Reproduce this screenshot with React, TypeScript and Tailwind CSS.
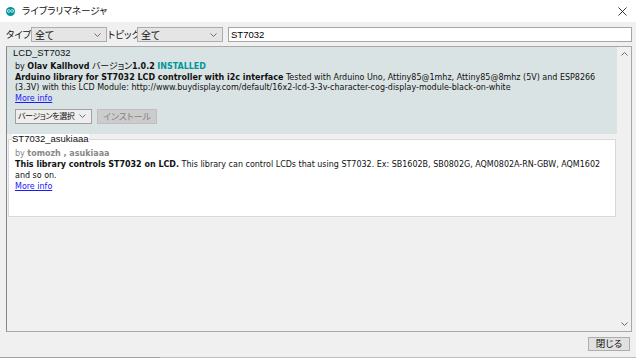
import React from "react";

const UI = "font-['Noto_Sans_CJK_JP',sans-serif] [font-feature-settings:'palt'] whitespace-nowrap";
const BODY = "font-['DejaVu_Sans_Condensed','DejaVu_Sans','Noto_Sans_CJK_JP',sans-serif] [font-stretch:semi-condensed] whitespace-nowrap";
const TITLE = "font-['Liberation_Sans','Noto_Sans_CJK_JP',sans-serif] whitespace-nowrap";

function Chevron({ down = true }: { down?: boolean }) {
  return (
    <svg width="7" height="4" viewBox="0 0 7 4" className="shrink-0">
      <polyline
        points={down ? "0.5,0.5 3.5,3.5 6.5,0.5" : "0.5,3.5 3.5,0.5 6.5,3.5"}
        fill="none"
        stroke="#606060"
        strokeWidth="0.9"
      />
    </svg>
  );
}

function Select({ w, label }: { w: string; label: string }) {
  return (
    <div className={`${w} h-[15px] bg-[#e5e5e5] border border-[#adadad] flex items-center pl-[3px] pr-[5px] shrink-0`}>
      <span className={`${UI} text-[10px] leading-none flex-1 text-[#111]`}>{label}</span>
      <Chevron />
    </div>
  );
}

export default function App() {
  return (
    <div className="w-[636px] h-[358px] bg-[#f0f0f0] flex flex-col overflow-hidden text-black">
      {/* title bar */}
      <div className="h-[22px] bg-white flex items-center shrink-0">
        <div className="ml-[6px] w-[9px] h-[9px] rounded-full bg-[#00979c] flex items-center justify-center">
          <svg width="7" height="4" viewBox="0 0 7 4">
            <path d="M3.5 2 C2.8 1 2.3 0.6 1.7 0.6 C1 0.6 0.5 1.2 0.5 2 C0.5 2.8 1 3.4 1.7 3.4 C2.3 3.4 2.8 3 3.5 2 C4.2 1 4.7 0.6 5.3 0.6 C6 0.6 6.5 1.2 6.5 2 C6.5 2.8 6 3.4 5.3 3.4 C4.7 3.4 4.2 3 3.5 2 Z" fill="none" stroke="white" strokeWidth="0.8" />
          </svg>
        </div>
        <span className={`${UI} ml-[7px] text-[9.6px] leading-none text-[#111]`}>ライブラリマネージャ</span>
        <div className="ml-auto mr-[9px]">
          <svg width="9" height="9" viewBox="0 0 9 9">
            <path d="M0.5 0.5 L8.5 8.5 M8.5 0.5 L0.5 8.5" stroke="#222" strokeWidth="0.9" />
          </svg>
        </div>
      </div>

      {/* filter row */}
      <div className="mt-[5px] h-[15px] flex items-center pl-[6px] pr-[4px] shrink-0">
        <span className={`${UI} text-[9.5px] leading-none w-[25px] shrink-0 text-[#111]`}>タイプ</span>
        <Select w="w-[76px]" label="全て" />
        <span className={`${UI} text-[9.5px] leading-none w-[29px] ml-[1px] shrink-0 text-[#111]`}>トピック</span>
        <Select w="w-[86px]" label="全て" />
        <div className="ml-[5px] flex-1 h-[15px] bg-white border border-[#a5a5a5] flex items-center pl-[2px]">
          <span className={`${TITLE} text-[9.5px] leading-none`}>ST7032</span>
        </div>
      </div>

      {/* list panel */}
      <div className="mt-[4px] ml-[6px] mr-[4px] h-[286px] border border-[#a8a8a8] border-l-[#828790] flex shrink-0">
        <div className="flex-1 flex flex-col">
          {/* item 1 (selected) */}
          <div className="h-[87px] bg-[#dae3e3] flex flex-col pl-[6px] shrink-0">
            <div className={`${TITLE} text-[9.5px] leading-[10px] mt-[1px] text-[#111]`}>LCD_ST7032</div>
            <div className={`${BODY} text-[8.9px] leading-[10.7px] pl-[2px] mt-[3px] text-[#111]`}>
              <div>
                by <b>Olav Kallhovd</b> <span className={UI}>バージョン</span>
                <b>1.0.2</b> <b className="text-[#00979c]">INSTALLED</b>
              </div>
              <div>
                <b>Arduino library for ST7032 LCD controller with i2c interface</b> Tested with Arduino Uno, Attiny85@1mhz, Attiny85@8mhz (5V) and ESP8266
              </div>
              <div>(3.3V) with this LCD Module: http://www.buydisplay.com/default/16x2-lcd-3-3v-character-cog-display-module-black-on-white</div>
              <div>
                <span className="text-[#1a1aff] underline">More info</span>
              </div>
            </div>
            <div className="flex items-center gap-[5px] mt-[5px] pl-[2px]">
              <div className="w-[77px] h-[15px] bg-[#eeeeee] border border-[#a0a0a0] flex items-center pl-[2px] pr-[5px] shrink-0">
                <span className={`${UI} text-[8px] tracking-[-0.4px] leading-none flex-1 text-[#111]`}>バージョンを選択</span>
                <Chevron />
              </div>
              <div className="w-[60px] h-[15px] bg-[#cccccc] border border-[#bfbfbf] flex items-center justify-center shrink-0">
                <span className={`${UI} text-[9px] leading-none text-[#838383]`}>インストール</span>
              </div>
            </div>
          </div>

          {/* item 2 */}
          <fieldset className="mx-[1px] h-[83px] border border-[#d9d9d9] bg-white pt-[4px] shrink-0">
            <legend className={`${TITLE} text-[9.5px] leading-[10px] ml-[3px] px-0 bg-white text-[#111]`}>ST7032_asukiaaa</legend>
            <div className={`${BODY} text-[8.9px] leading-[10.9px] pl-[6px] text-[#111]`}>
              <div className="text-[#888]">
                by <b>tomozh , asukiaaa</b>
              </div>
              <div>
                <b>This library controls ST7032 on LCD.</b> This library can control LCDs that using ST7032. Ex: SB1602B, SB0802G, AQM0802A-RN-GBW, AQM1602
              </div>
              <div>and so on.</div>
              <div>
                <span className="text-[#1a1aff] underline">More info</span>
              </div>
            </div>
          </fieldset>
        </div>

        {/* scrollbar */}
        <div className="w-[14px] bg-[#f0f0f0] flex flex-col items-center justify-between py-[5px]">
          <Chevron down={false} />
          <Chevron />
        </div>
      </div>

      {/* bottom */}
      <div className="flex-1 flex items-start justify-end pr-[6px] pt-[5px]">
        <div className="w-[42px] h-[14px] bg-[#e1e1e1] border border-[#adadad] flex items-center justify-center">
          <span className={`${UI} text-[9.5px] leading-none text-[#111]`}>閉じる</span>
        </div>
      </div>
      <div className="h-[1px] flex shrink-0">
        <div className="w-[160px] bg-[#9aa4ac]" />
        <div className="flex-1 bg-[#c2bebe]" />
      </div>
    </div>
  );
}
